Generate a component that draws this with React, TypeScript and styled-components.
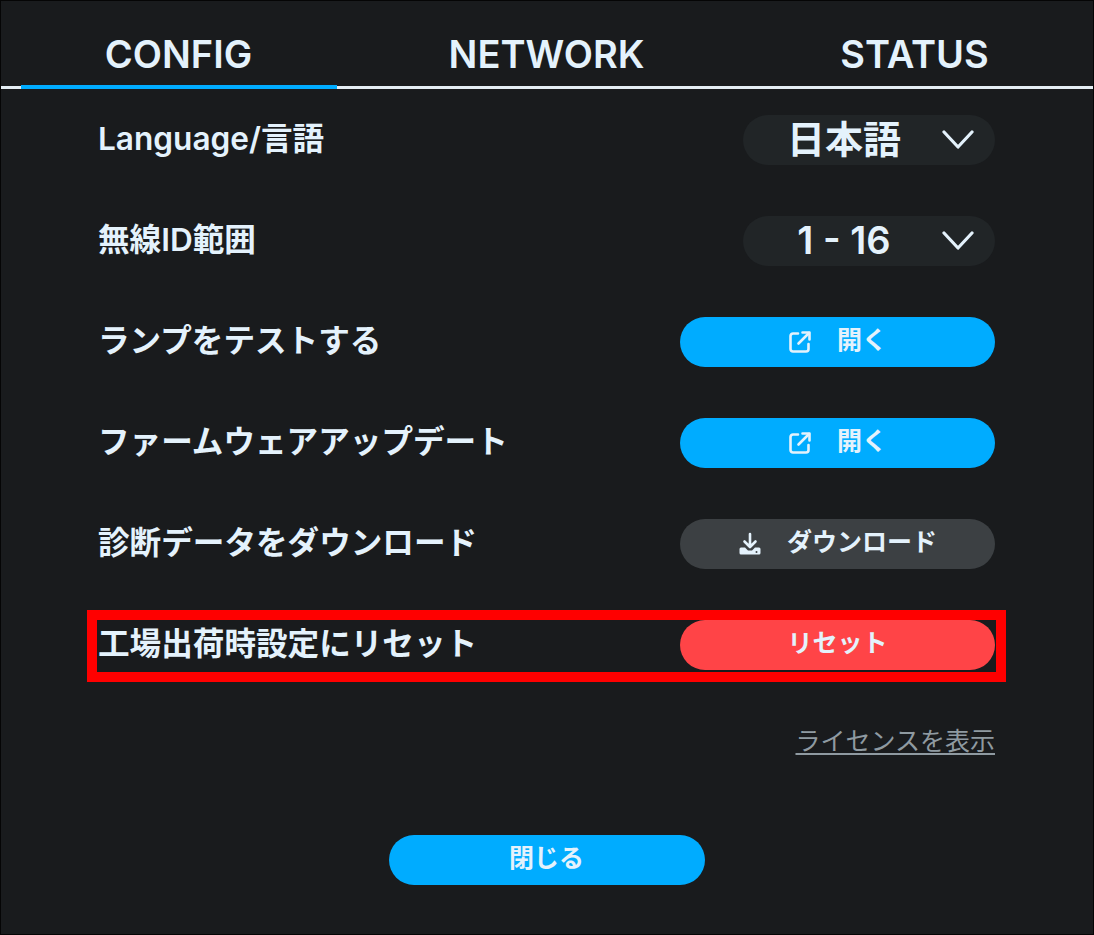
import React from 'react';
import styled, { createGlobalStyle } from 'styled-components';

const GlobalStyle = createGlobalStyle`
  html, body {
    margin: 0;
    padding: 0;
    background: #191b1d;
  }
  * {
    box-sizing: border-box;
  }
`;

const Screen = styled.div`
  position: relative;
  width: 1094px;
  height: 935px;
  background: #191b1d;
  border: 1px solid #050505;
  color: #e4f2fc;
  font-family: Inter, "Noto Sans CJK JP", sans-serif;
  overflow: hidden;
`;

const TabBar = styled.div`
  display: flex;
  justify-content: space-between;
  height: 88px;
  padding: 0 20px;
  border-bottom: 3px solid #e4edf3;
`;

const Tab = styled.div<{ $active?: boolean }>`
  width: 316px;
  height: 88px;
  padding-top: 30px;
  padding-right: 1px;
  text-align: center;
  font-size: 38px;
  line-height: 46px;
  font-weight: 600;
  border-bottom: 4px solid ${({ $active }) => ($active ? '#00acff' : 'transparent')};
`;

const Form = styled.div`
  display: flex;
  flex-direction: column;
  gap: 51px;
  padding: 26px 98px 0 97px;
`;

const Row = styled.div`
  display: flex;
  align-items: center;
  justify-content: space-between;
  height: 50px;
`;

const Label = styled.div`
  font-size: 31.6px;
  line-height: 50px;
  font-weight: 600;
  margin-top: -3px;
`;

const Select = styled.div`
  display: flex;
  align-items: center;
  width: 252px;
  height: 50px;
  padding-right: 21px;
  border-radius: 25px;
  background: #212527;
`;

const SelectValue = styled.span`
  flex: 1;
  padding-left: 3px;
  margin-top: -3px;
  text-align: center;
  font-size: 38px;
  line-height: 50px;
  font-weight: 600;
`;

const Pill = styled.button<{ $tone: 'blue' | 'gray' | 'red'; $wide?: boolean }>`
  display: flex;
  align-items: center;
  justify-content: center;
  gap: 25px;
  width: ${({ $wide }) => ($wide ? '316px' : '315px')};
  height: 50px;
  padding: 0 0 3px 0;
  border: none;
  border-radius: 25px;
  background: ${({ $tone }) =>
    $tone === 'blue' ? '#00acff' : $tone === 'gray' ? '#3c4043' : '#ff4447'};
  color: #e4f2fc;
  font-family: inherit;
  font-size: 25px;
  line-height: 47px;
  font-weight: 700;
  svg {
    margin-top: 3px;
  }
`;

const LicenseRow = styled.div`
  display: flex;
  justify-content: flex-end;
  padding: 2px 98px 0 0;
  margin-top: 51px;
`;

const LicenseLink = styled.a`
  font-size: 25px;
  line-height: 36px;
  color: #8f9aa1;
  text-decoration: underline;
  text-underline-offset: 3px;
`;

const Footer = styled.div`
  display: flex;
  justify-content: center;
  margin-top: 76px;
  padding-right: 1px;
`;

const Highlight = styled.div`
  position: absolute;
  left: 86px;
  top: 609px;
  width: 919px;
  height: 72px;
  border: 10px solid #ff0000;
  pointer-events: none;
`;

const Chevron = () => (
  <svg width="32" height="22" viewBox="0 0 32 22" fill="none">
    <path d="M2 3 L16 18 L30 3" stroke="#e4f2fc" strokeWidth="3.2" strokeLinecap="round" strokeLinejoin="round" />
  </svg>
);

const OpenIcon = () => (
  <svg width="24" height="24" viewBox="0 0 24 24" fill="none" stroke="#e4f2fc" strokeWidth="2.6" strokeLinecap="round" strokeLinejoin="round">
    <path d="M10 3.5 H5 a2.5 2.5 0 0 0 -2.5 2.5 V19 a2.5 2.5 0 0 0 2.5 2.5 H18 a2.5 2.5 0 0 0 2.5 -2.5 V14" />
    <path d="M10.5 13.5 L21 3" />
    <path d="M14.5 2.5 H21.5 V9.5" />
  </svg>
);

const DownloadIcon = () => (
  <svg width="24" height="24" viewBox="0 0 24 24" fill="none">
    <path d="M12 2 V14 M6.5 9.5 L12 15 L17.5 9.5" stroke="#e4f2fc" strokeWidth="2.6" strokeLinecap="round" strokeLinejoin="round" />
    <path d="M3 15.5 H7 L10 18.5 H14 L17 15.5 H21 a1.5 1.5 0 0 1 1.5 1.5 V21 a1.5 1.5 0 0 1 -1.5 1.5 H3 a1.5 1.5 0 0 1 -1.5 -1.5 V17 a1.5 1.5 0 0 1 1.5 -1.5 Z" fill="#e4f2fc" />
    <circle cx="18.5" cy="20" r="1" fill="#3c4043" />
  </svg>
);

const App = () => {
  return (
    <Screen>
      <GlobalStyle />
      <TabBar>
        <Tab $active>CONFIG</Tab>
        <Tab>NETWORK</Tab>
        <Tab>STATUS</Tab>
      </TabBar>
      <Form>
        <Row>
          <Label>Language/言語</Label>
          <Select>
            <SelectValue>日本語</SelectValue>
            <Chevron />
          </Select>
        </Row>
        <Row>
          <Label>無線ID範囲</Label>
          <Select>
            <SelectValue>1 - 16</SelectValue>
            <Chevron />
          </Select>
        </Row>
        <Row>
          <Label>ランプをテストする</Label>
          <Pill $tone="blue">
            <OpenIcon />
            開く
          </Pill>
        </Row>
        <Row>
          <Label>ファームウェアアップデート</Label>
          <Pill $tone="blue">
            <OpenIcon />
            開く
          </Pill>
        </Row>
        <Row>
          <Label>診断データをダウンロード</Label>
          <Pill $tone="gray">
            <DownloadIcon />
            ダウンロード
          </Pill>
        </Row>
        <Row>
          <Label>工場出荷時設定にリセット</Label>
          <Pill $tone="red">リセット</Pill>
        </Row>
      </Form>
      <LicenseRow>
        <LicenseLink>ライセンスを表示</LicenseLink>
      </LicenseRow>
      <Footer>
        <Pill $tone="blue" $wide>閉じる</Pill>
      </Footer>
      <Highlight />
    </Screen>
  );
};

export default App;
